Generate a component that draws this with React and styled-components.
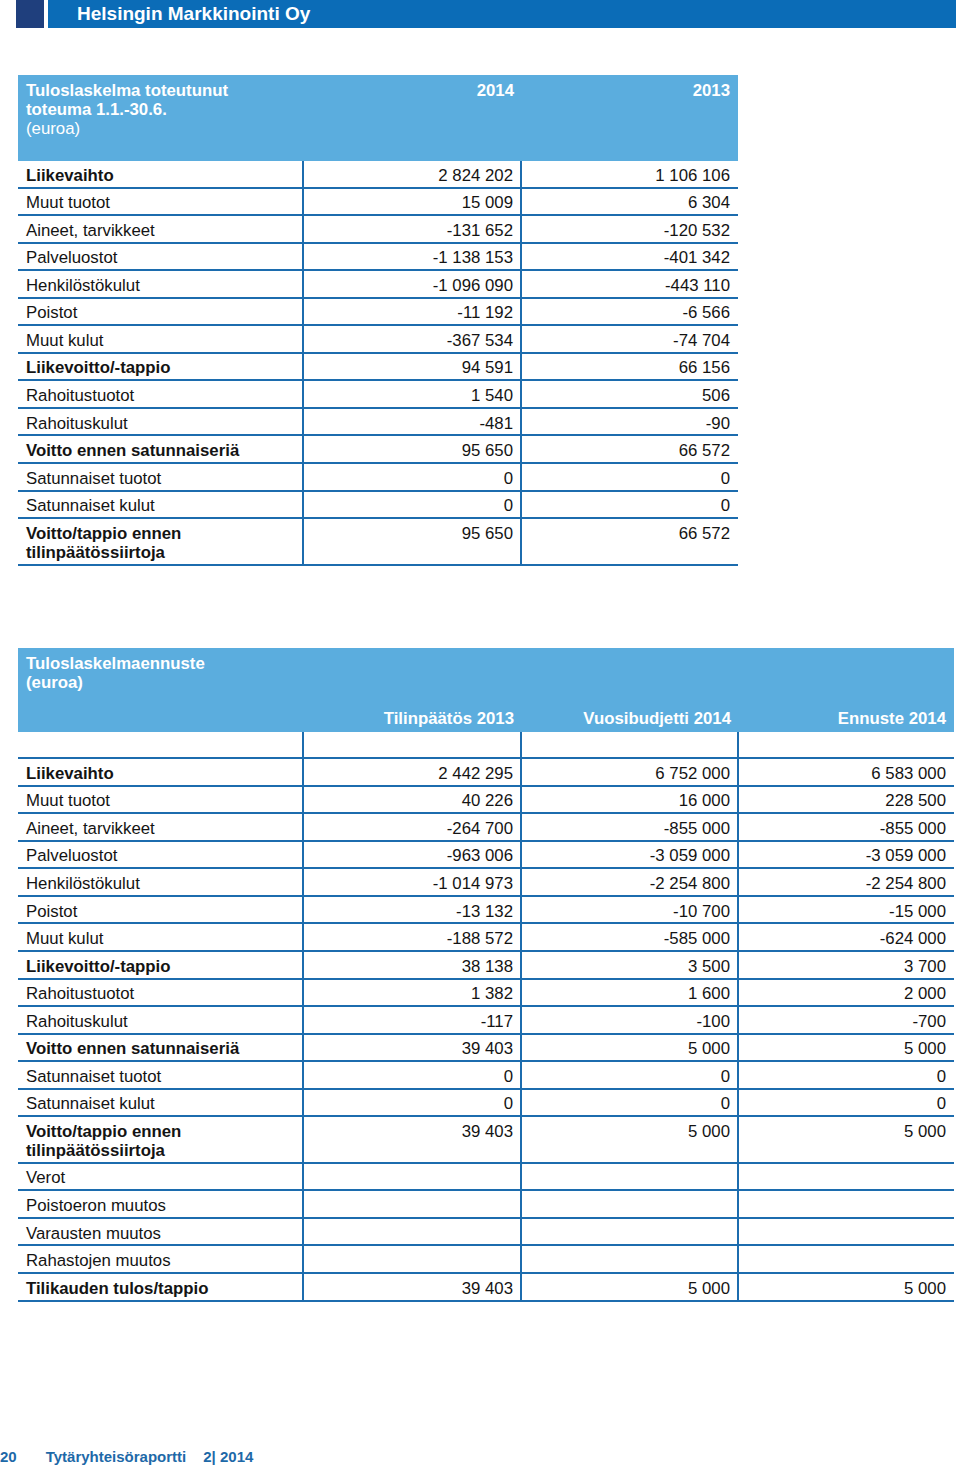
import React from 'react';
import styled, { createGlobalStyle } from 'styled-components';

const GlobalStyle = createGlobalStyle`
    body {
        margin: 0;
        background: #fff;
        font-family: "Liberation Sans", Arial, sans-serif;
        color: #141414;
    }
`

const LINE = '#1c6cae';
const HEAD_BG = '#5badde';

/** styled components */
const Page = styled.div`
    width: 960px;
    min-height: 1469px;
    display: flex;
    flex-direction: column;
`
const TopBar = styled.div`
    display: flex;
    gap: 4px;
    height: 28px;
    padding: 0 4px 0 16px;
`
const Square = styled.div`
    width: 28px;
    background-color: #1f3f7d;
`
const Bar = styled.div`
    flex: 1;
    background-color: #0b6cb7;
    color: #fff;
    font-size: 19px;
    font-weight: 700;
    line-height: 28px;
    padding-left: 29px;
`
const Table = styled.div`
    margin: ${(props) => props.$top}px 0 0 18px;
    width: ${(props) => props.$width}px;
    font-size: 16.8px;
    line-height: 19px;
`
const Head = styled.div`
    display: grid;
    grid-template-columns: ${(props) => props.$cols};
    height: ${(props) => props.$height}px;
    background-color: ${HEAD_BG};
    color: #fff;
    font-weight: 700;
`
const HeadCell = styled.div`
    display: flex;
    flex-direction: column;
    justify-content: ${(props) => props.$bottom ? 'flex-end' : 'flex-start'};
    text-align: ${(props) => props.$right ? 'right' : 'left'};
    padding: 6px 8px 3.5px;
`
const Light = styled.span`
    font-weight: 400;
`
const Row = styled.div`
    display: grid;
    grid-template-columns: ${(props) => props.$cols};
`
const Cell = styled.div`
    box-sizing: border-box;
    min-height: 27.55px;
    padding: 4.6px 8px 1.95px;
    border-bottom: 2px solid ${LINE};
    text-align: ${(props) => props.$right ? 'right' : 'left'};
    font-weight: ${(props) => props.$bold ? 700 : 400};

    &:not(:last-child) {
        border-right: 2px solid ${LINE};
        padding-right: 7px;
    }
`
const Footer = styled.div`
    display: flex;
    margin-top: 145px;
    color: #1d69a8;
    font-size: 15px;
    font-weight: 700;
    line-height: 19px;
`
const FooterItem = styled.span`
    margin-left: ${(props) => props.$gap || 0}px;
`

const rows1 = [
    ['Liikevaihto', '2 824 202', '1 106 106', true],
    ['Muut tuotot', '15 009', '6 304'],
    ['Aineet, tarvikkeet', '-131 652', '-120 532'],
    ['Palveluostot', '-1 138 153', '-401 342'],
    ['Henkilöstökulut', '-1 096 090', '-443 110'],
    ['Poistot', '-11 192', '-6 566'],
    ['Muut kulut', '-367 534', '-74 704'],
    ['Liikevoitto/-tappio', '94 591', '66 156', true],
    ['Rahoitustuotot', '1 540', '506'],
    ['Rahoituskulut', '-481', '-90'],
    ['Voitto ennen satunnaiseriä', '95 650', '66 572', true],
    ['Satunnaiset tuotot', '0', '0'],
    ['Satunnaiset kulut', '0', '0'],
    [<>Voitto/tappio ennen<br />tilinpäätössiirtoja</>, '95 650', '66 572', true],
];

const rows2 = [
    ['', '', '', ''],
    ['Liikevaihto', '2 442 295', '6 752 000', '6 583 000', true],
    ['Muut tuotot', '40 226', '16 000', '228 500'],
    ['Aineet, tarvikkeet', '-264 700', '-855 000', '-855 000'],
    ['Palveluostot', '-963 006', '-3 059 000', '-3 059 000'],
    ['Henkilöstökulut', '-1 014 973', '-2 254 800', '-2 254 800'],
    ['Poistot', '-13 132', '-10 700', '-15 000'],
    ['Muut kulut', '-188 572', '-585 000', '-624 000'],
    ['Liikevoitto/-tappio', '38 138', '3 500', '3 700', true],
    ['Rahoitustuotot', '1 382', '1 600', '2 000'],
    ['Rahoituskulut', '-117', '-100', '-700'],
    ['Voitto ennen satunnaiseriä', '39 403', '5 000', '5 000', true],
    ['Satunnaiset tuotot', '0', '0', '0'],
    ['Satunnaiset kulut', '0', '0', '0'],
    [<>Voitto/tappio ennen<br />tilinpäätössiirtoja</>, '39 403', '5 000', '5 000', true],
    ['Verot', '', '', ''],
    ['Poistoeron muutos', '', '', ''],
    ['Varausten muutos', '', '', ''],
    ['Rahastojen muutos', '', '', ''],
    ['Tilikauden tulos/tappio', '39 403', '5 000', '5 000', true],
];

const COLS1 = '286px 218px 216px';
const COLS2 = '286px 218px 217px 215px';

const DataRows = ({ rows, cols, count }) => (
    <>
        {rows.map((row, i) => (
            <Row key={i} $cols={cols}>
                <Cell $bold={row[count]}>{row[0]}</Cell>
                {row.slice(1, count).map((value, j) => (
                    <Cell key={j} $right>{value}</Cell>
                ))}
            </Row>
        ))}
    </>
)

const App = () => {
    return (
        <Page>
            <GlobalStyle />
            <TopBar>
                <Square />
                <Bar>Helsingin Markkinointi Oy</Bar>
            </TopBar>

            <Table $top={47} $width={720}>
                <Head $cols={COLS1} $height={86}>
                    <HeadCell>
                        Tuloslaskelma toteutunut<br />
                        toteuma 1.1.-30.6.<br />
                        <Light>(euroa)</Light>
                    </HeadCell>
                    <HeadCell $right>2014</HeadCell>
                    <HeadCell $right>2013</HeadCell>
                </Head>
                <DataRows rows={rows1} cols={COLS1} count={3} />
            </Table>

            <Table $top={82} $width={936}>
                <Head $cols={COLS2} $height={84}>
                    <HeadCell>
                        Tuloslaskelmaennuste<br />
                        (euroa)
                    </HeadCell>
                    <HeadCell $right $bottom>Tilinpäätös 2013</HeadCell>
                    <HeadCell $right $bottom>Vuosibudjetti 2014</HeadCell>
                    <HeadCell $right $bottom>Ennuste 2014</HeadCell>
                </Head>
                <DataRows rows={rows2} cols={COLS2} count={4} />
            </Table>

            <Footer>
                <FooterItem>20</FooterItem>
                <FooterItem $gap={29}>Tytäryhteisöraportti</FooterItem>
                <FooterItem $gap={17}>2| 2014</FooterItem>
            </Footer>
        </Page>
    )
}

export default App;
